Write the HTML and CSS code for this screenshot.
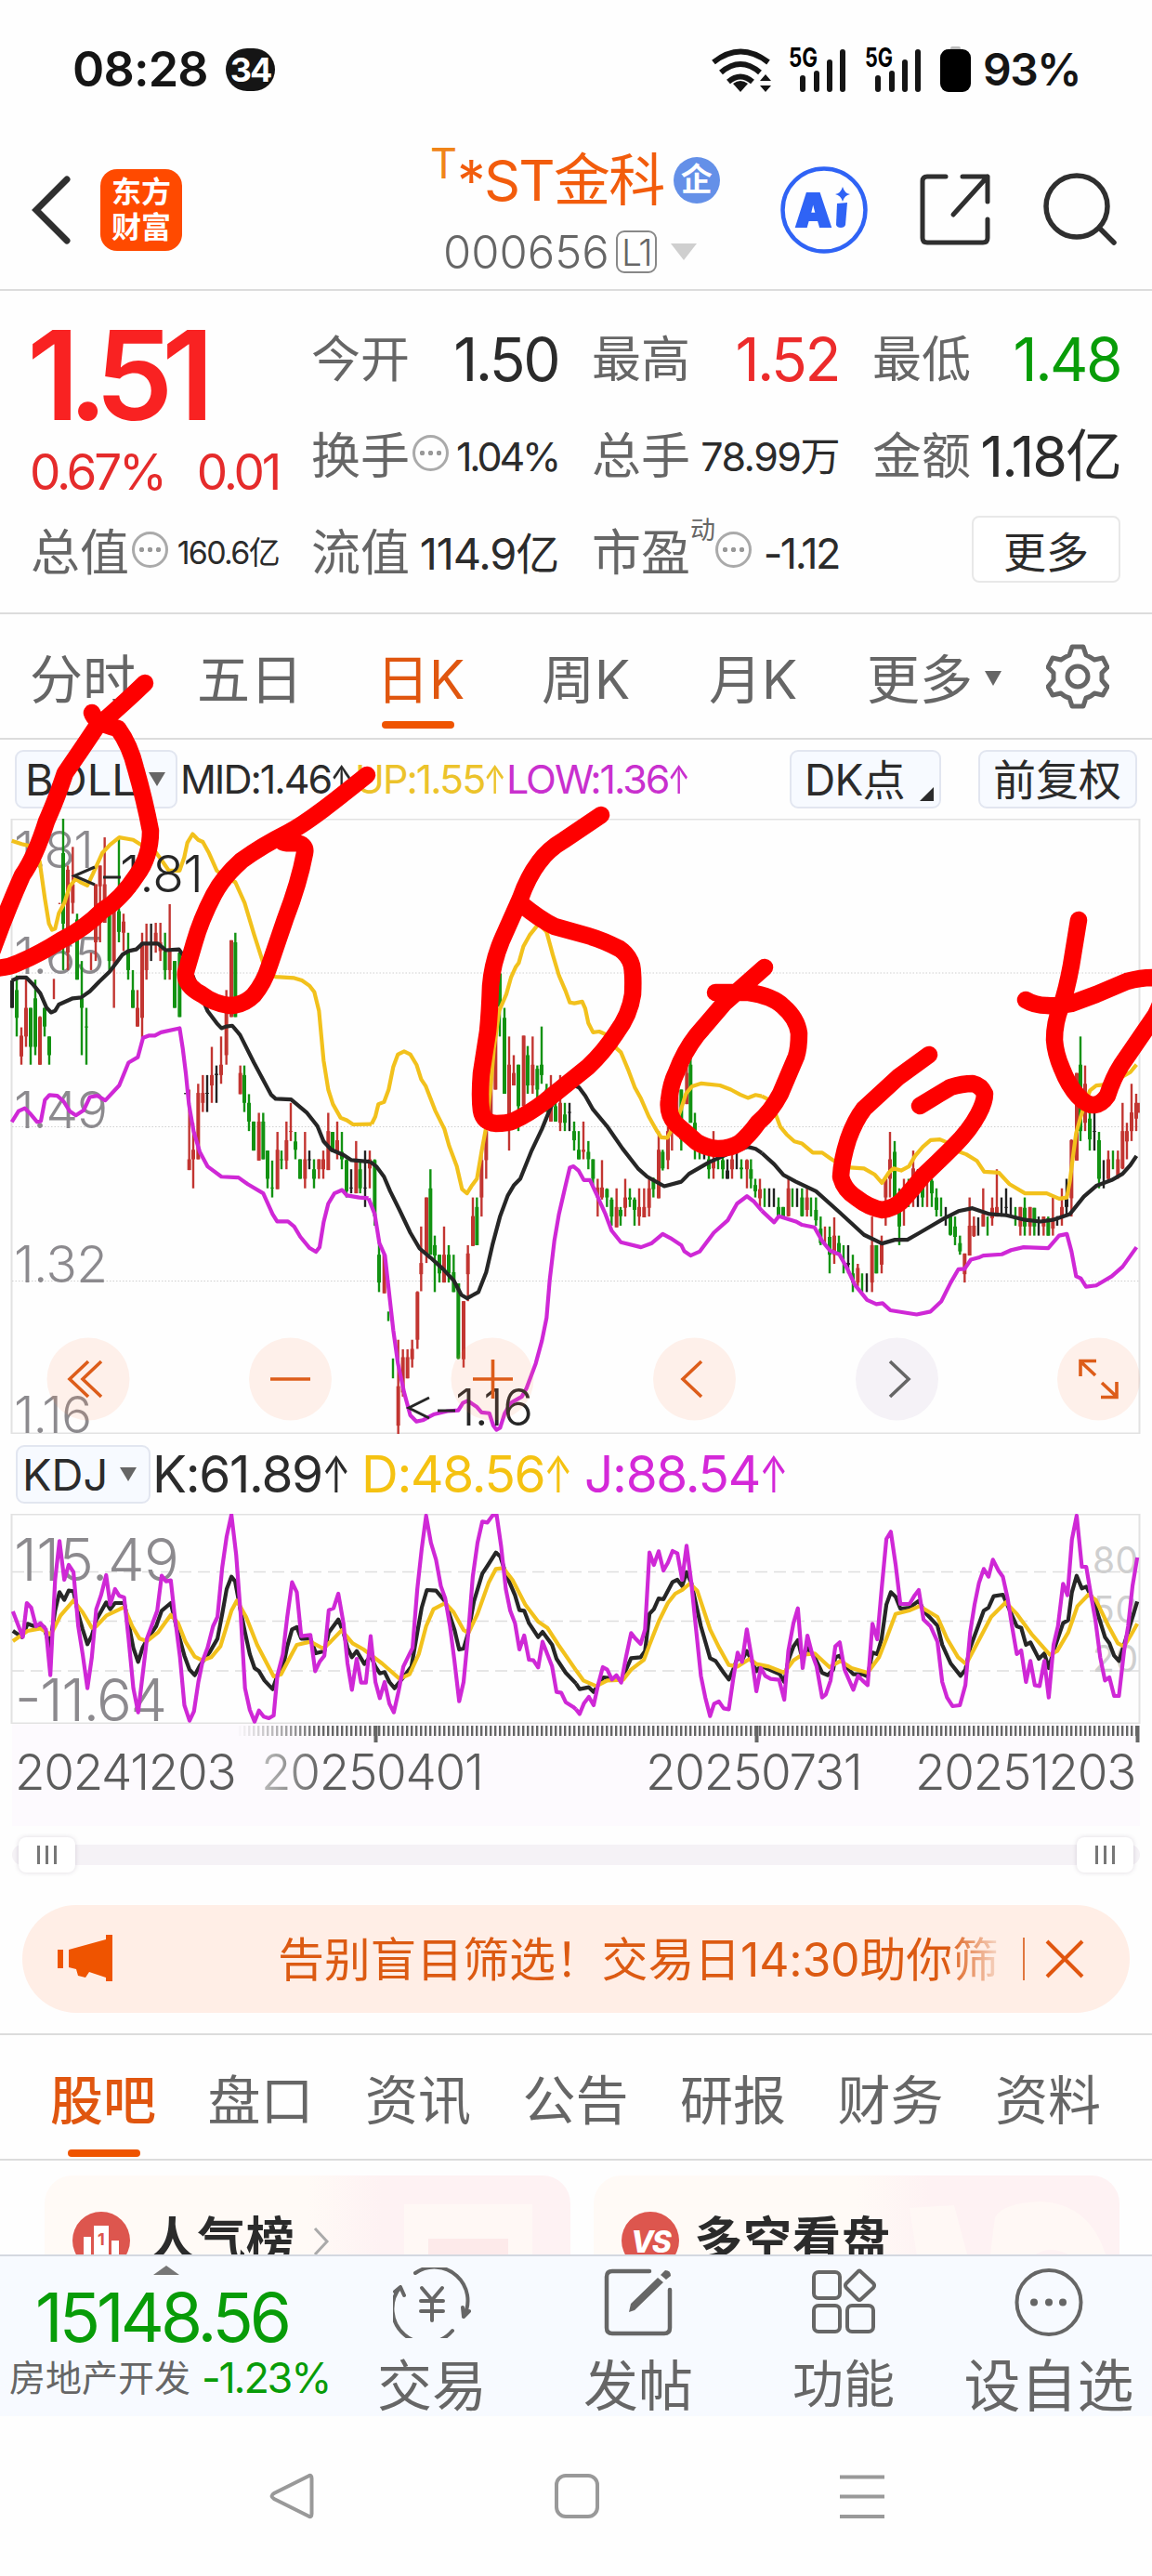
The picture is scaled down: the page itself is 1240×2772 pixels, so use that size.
FILE: index.html
```html
<!DOCTYPE html>
<html lang="zh-CN">
<head>
  <meta charset="UTF-8">
  <title>*ST金科 000656</title>
  <link rel="stylesheet" href="styles.css">
</head>
<body>

  <div class="status">
    <span class="clock">08:28</span>
    <span class="badge">34</span>
    <svg class="signals" width="286" height="54" viewBox="768 46 286 54">
      <g fill="none" stroke="#151515" stroke-width="6">
        <path d="M773 65Q802 42 832 65"/>
        <path d="M781 76Q802 58 823 76"/>
        <path d="M789 86Q802 75 815 86"/>
      </g>
      <path d="M794 88q8-6 16 0l-8 9z" fill="#151515"/>
      <path d="M823 85l6-7 6 7zM823 90l6 7 6-7z" fill="#151515"/>
      <g stroke="#151515" stroke-width="6" stroke-linecap="round">
        <path d="M869 82V94M884 77V94M898 65V94M912 54V94"/>
        <path d="M950 82V94M965 77V94M979 65V94M993 54V94"/>
      </g>
      <text x="854" y="70" class="net" textLength="31" lengthAdjust="spacingAndGlyphs">5G</text>
      <text x="936" y="70" class="net" textLength="30" lengthAdjust="spacingAndGlyphs">5G</text>
      <rect x="1028" y="48" width="11" height="6" rx="2" fill="#bbb"/>
      <rect x="1017" y="51" width="33" height="46" rx="9" fill="#000"/>
    </svg>
    <span class="battery">93%</span>
  </div>

  <div class="header">
    <svg class="back" width="44" height="74" viewBox="0 0 44 74"><path d="M39 4L6 37L39 70" fill="none" stroke="#2f2f2f" stroke-width="7" stroke-linecap="round"/></svg>
    <div class="logo"><span>东方</span><span>财富</span></div>
    <div class="title">
      <div class="name"><sup>T</sup><span>*ST金科</span><i>企</i></div>
      <div class="code"><span>000656</span><b>L1</b><em></em></div>
    </div>
    <svg class="ai" width="94" height="94" viewBox="0 0 94 94">
      <circle cx="47" cy="47" r="44.5" fill="none" stroke="#2f63f5" stroke-width="4.5"/>
      <text x="16" y="65" class="ai-text">A</text>
      <path d="M61 40l11-1-2 24q-1 3-5 3t-5-3z" fill="#2f63f5"/>
      <path d="M67 22q2 7 8 8q-6 1-8 8q-2-7-8-8q6-1 8-8z" fill="#2f63f5"/>
    </svg>
    <svg class="share" width="78" height="80" viewBox="0 0 78 80">
      <g fill="none" stroke="#2f2f2f" stroke-width="5" stroke-linecap="round" stroke-linejoin="round">
        <path d="M29 4H9Q4 4 4 9V70Q4 75 9 75H69Q74 75 74 70V50"/>
        <path d="M47 4H74V31M74 4L37 45"/>
      </g>
    </svg>
    <svg class="search" width="80" height="80" viewBox="0 0 80 80">
      <g fill="none" stroke="#2f2f2f" stroke-width="5.5" stroke-linecap="round"><circle cx="37" cy="38" r="33"/><path d="M62 62L77 77"/></g>
    </svg>
  </div>

  <div class="quote">
    <div class="last">
      <div class="price">1.51</div>
      <div class="change"><span>0.67%</span><span>0.01</span></div>
      <div class="cell"><label>总值</label><i class="tip"></i><span class="v34">160.6亿</span></div>
    </div>
    <div class="grid">
      <div class="cell"><label>今开</label><span class="v64">1.50</span></div>
      <div class="cell"><label>最高</label><span class="v64 red">1.52</span></div>
      <div class="cell"><label>最低</label><span class="v64 green">1.48</span></div>
      <div class="cell"><label>换手</label><i class="tip"></i><span class="v42">1.04%</span></div>
      <div class="cell"><label>总手</label><span class="v43">78.99万</span></div>
      <div class="cell"><label>金额</label><span class="v60">1.18亿</span></div>
      <div class="cell"><label>流值</label><span class="v47">114.9亿</span></div>
      <div class="cell"><label>市盈</label><small>动</small><i class="tip"></i><span class="v46">-1.12</span></div>
      <div class="cell"><button class="more">更多</button></div>
    </div>
  </div>

  <div class="periods">
    <span>分时</span>
    <span>五日</span>
    <span class="on">日K</span>
    <span>周K</span>
    <span>月K</span>
    <span>更多<em></em></span>
    <svg width="68" height="70" viewBox="-34 -35 68 70">
      <g fill="none" stroke="#666" stroke-width="5" stroke-linejoin="round">
        <path d="M-6 -32H6L9 -23Q14 -21 18 -18L27 -20L32 -10L26 -4V4L32 11L27 20L18 18Q14 22 9 23L6 32H-6L-9 23Q-14 22 -18 18L-27 20L-32 11L-26 4V-4L-32 -10L-27 -20L-18 -18Q-14 -21 -9 -23Z"/>
        <circle r="11"/>
      </g>
    </svg>
  </div>

  <div class="indicator boll">
    <span class="pick">BOLL<em></em></span>
    <span class="mid">MID:1.46<u>↑</u></span>
    <span class="up">UP:1.55<u>↑</u></span>
    <span class="low">LOW:1.36<u>↑</u></span>
    <span class="pick dk">DK点<em></em></span>
    <span class="pick fq">前复权</span>
  </div>

  <div class="panel price-panel">
    <svg width="1240" height="662" viewBox="0 0 1240 662">
      <rect x="12.5" y="0.5" width="1214" height="661" class="frame"/>
      <path d="M13 166H1227M13 331.500H1227M13 497.500H1227" class="dots"/>
      <g class="scale">
        <text x="15" y="53" textLength="86">1.81</text>
        <text x="15" y="167" textLength="98">1.65</text>
        <text x="15" y="333" textLength="101">1.49</text>
        <text x="15" y="499" textLength="101">1.32</text>
        <text x="15" y="661" textLength="84">1.16</text>
      </g>
      <g id="candles" transform="translate(0 -21) scale(.33333 .44643)"></g>
      <g class="line gold">
        <g transform="translate(0 -21) scale(.33333 .44643)">
          <polyline points="38,100 70,108 110,115 128,150 145,240 158,300 168,315 178,312 190,275 208,250 225,210 245,192 260,200 282,208 300,180 330,130 355,110 385,92 430,98 460,112 490,115 520,145 545,172 580,172 595,140 605,105 622,84 640,98 655,103 675,130 700,172 730,190 760,200 790,250 820,325 850,395 870,420 890,428 950,431 975,437 1000,450 1015,465 1030,510 1045,630 1060,700 1075,735 1100,768 1120,774 1140,784 1200,783"/>
        </g>
        <g transform="translate(400 -21) scale(.33333 .44643)">
          <polyline points="0,783 12,765 22,735 40,730 55,700 70,645 85,615 105,608 125,615 145,640 160,675 175,692 205,750 235,795 250,835 275,885 292,940 308,950 325,930 340,915 355,850 370,790 385,690 395,600 412,510 435,470 450,430 465,405 475,395 490,355 510,328 540,300 565,320 585,375 605,425 625,460 640,490 655,492 680,488 690,505 700,540 715,562 735,560 760,568 790,600 805,610 830,655 850,695 870,722 895,765 920,798 935,815 955,816 970,795 985,775 1000,745 1015,710 1035,692 1065,685 1125,690 1160,700 1190,712 1215,720 1240,713 1260,716"/>
        </g>
        <g transform="translate(820 -21) scale(.33333 .44643)">
          <polyline points="0,716 25,725 45,760 60,790 80,808 105,825 130,830 165,852 195,852 220,865 240,875 285,888 330,890 365,905 388,925 410,900 425,890 450,895 475,885 495,860 520,838 545,822 575,820 600,828 630,848 660,856 695,872 718,898 765,900 800,928 850,950 920,950 960,963 985,960 995,920 1005,860 1015,805 1030,765 1045,730 1060,702 1080,690 1110,688 1150,675 1190,658 1210,640"/>
        </g>
      </g>
      <g class="line black">
        <g transform="translate(0 -21) scale(.33333 .44643)">
          <polyline points="38,437 60,430 85,430 105,445 130,468 150,502 165,514 178,510 190,495 235,480 262,478 290,463 320,440 355,415 395,375 415,366 440,362 460,348 510,348 535,364 578,362 600,385 630,440 670,510 700,540 715,552 730,548 750,546 775,568 820,635 875,712 890,722 940,724 990,755 1025,788 1045,825 1070,845 1110,858 1135,870 1195,874"/>
        </g>
        <g transform="translate(400 -21) scale(.33333 .44643)">
          <polyline points="-5,874 15,885 40,910 60,945 90,990 125,1045 155,1083 190,1105 230,1132 265,1160 290,1195 308,1203 345,1188 370,1140 390,1075 415,1005 440,955 460,930 480,915 515,850 550,795 580,740 605,712 650,688 670,695 690,715 715,748 760,788 810,842 860,890 890,910 945,933 1000,922 1025,903 1090,875 1160,852 1215,838 1240,843 1260,853"/>
        </g>
        <g transform="translate(820 -21) scale(.33333 .44643)">
          <polyline points="0,853 40,880 70,906 110,922 175,945 250,995 330,1050 388,1071 430,1062 470,1062 510,1045 590,1010 635,993 680,986 735,1000 790,1003 850,1014 900,1018 940,1014 995,1000 1040,958 1080,932 1130,918 1165,903 1190,882 1210,860"/>
        </g>
      </g>
      <g class="line purple">
        <g transform="translate(0 -21) scale(.33333 .44643)">
          <polyline points="38,778 60,752 80,745 100,760 120,778 132,776 145,725 160,713 185,715 205,728 225,752 245,762 270,750 290,718 315,715 340,726 385,690 415,635 445,622 462,575 480,570 500,570 520,562 580,552 590,600 600,660 610,735 625,800 645,850 670,885 715,910 770,912 800,928 850,950 880,1000 895,1018 930,1018 950,1030 970,1055 1000,1082 1020,1091 1032,1080 1045,1020 1060,975 1080,950 1105,942 1120,955 1160,960 1190,962"/>
        </g>
        <g transform="translate(400 -21) scale(.33333 .44643)">
          <polyline points="-10,962 10,1000 25,1070 43,1100 55,1180 70,1280 85,1360 105,1430 125,1485 145,1500 165,1497 200,1483 245,1475 280,1473 295,1455 310,1450 340,1465 355,1478 380,1480 393,1510 403,1520 415,1515 430,1480 450,1455 485,1440 500,1420 530,1360 550,1305 565,1250 575,1160 590,1065 605,1000 625,935 640,888 652,885 668,895 685,918 705,918 725,950 755,1000 775,1040 805,1068 870,1080 905,1070 940,1048 965,1058 1000,1075 1010,1090 1030,1100 1060,1090 1105,1045 1150,1015 1180,975 1212,957 1235,970 1260,992"/>
        </g>
        <g transform="translate(820 -21) scale(.33333 .44643)">
          <polyline points="0,992 40,1020 55,1005 110,1018 130,1026 170,1032 195,1065 220,1088 250,1097 275,1130 300,1170 340,1207 370,1217 390,1215 415,1232 500,1242 545,1235 580,1210 610,1165 635,1133 655,1132 675,1110 700,1105 715,1100 775,1097 805,1087 845,1080 925,1082 960,1052 985,1048 1000,1090 1015,1150 1030,1155 1047,1175 1080,1172 1130,1150 1165,1127 1210,1080"/>
        </g>
      </g>
      <g class="mark">
        <path d="M102 52L80 61.500L102 71M111 63H130"/>
        <text x="129" y="79" textLength="90">1.81</text>
        <path d="M462 623L440 634L462 645M471 637H490"/>
        <text x="490" y="653" textLength="84">1.16</text>
      </g>
      <g class="tools">
        <circle cx="95" cy="603" r="44.500"/>
        <circle cx="312.500" cy="603" r="44.500"/>
        <circle cx="530" cy="603" r="44.500"/>
        <circle cx="747.500" cy="603" r="44.500"/>
        <circle cx="965.500" cy="603" r="44.500" class="off"/>
        <circle cx="1182.500" cy="603" r="44.500"/>
        <path d="M95 584L75 603L95 622M109 584L89 603L109 622"/>
        <path d="M291 603H334M509 603H552M530.500 582V624"/>
        <path d="M755 584L735 603L755 622"/>
        <path d="M958 584L978 603L958 622" class="off"/>
        <path d="M1180 583.500H1163V600M1163 584L1179 599M1185 622.500H1202V606M1202 622L1186 607"/>
      </g>
    </svg>
  </div>

  <div class="indicator kdj">
    <span class="pick">KDJ<em></em></span>
    <span class="k">K:61.89<u>↑</u></span>
    <span class="d">D:48.56<u>↑</u></span>
    <span class="j">J:88.54<u>↑</u></span>
  </div>

  <div class="panel">
    <svg width="1240" height="226" viewBox="0 0 1240 226">
      <rect x="12.5" y="0.5" width="1214" height="225" class="frame"/>
      <path d="M13 62.500H1227M13 115.500H1227M13 169H1227" class="dashes"/>
      <g class="levels">
        <text x="1176" y="64" textLength="49">80</text>
        <text x="1176" y="117" textLength="49">50</text>
        <text x="1176" y="170" textLength="49">20</text>
      </g>
      <g class="scale big">
        <text x="15" y="72" textLength="178">115.49</text>
        <text x="16" y="223" textLength="164">-11.64</text>
      </g>
      <g class="line black">
        <g transform="translate(0 -79) scale(.3954 .33333)">
          <polyline points="35,615 60,635 75,592 98,602 120,602 135,665 150,550 162,490 175,515 187,485 200,487 213,560 225,610 238,658 250,630 262,580 289,523 300,545 313,525 338,525 350,590 363,670 376,715 388,670 402,640 425,600 440,550 465,525 480,600 502,695 516,740 530,758 545,725 570,685 592,640 605,560 617,480 630,440 640,455 655,550 667,620 680,690 693,735 705,745 720,775 742,803 755,760 770,735 782,665 795,610 808,603 820,640 845,640 860,687 883,680 895,620 921,578 935,620 946,670 958,700 971,680 992,722 1009,695 1022,730 1034,752 1047,748 1060,780 1074,800 1098,765 1120,730 1136,620 1148,540 1162,483 1187,485 1212,520 1237,610 1250,675 1262,672 1275,620 1290,520 1313,430 1327,405 1350,362 1362,375 1377,430 1402,500 1414,548 1427,550 1440,590 1465,635 1477,618 1503,660 1515,705 1540,750 1568,785"/>
        </g>
        <g transform="translate(620 -79) scale(.3954 .33333)">
          <polyline points="0,785 10,803 35,797 48,812 60,790 75,765 98,768 123,775 150,703 176,700 188,680 200,560 212,545 225,510 238,513 263,457 276,450 289,470 301,425 314,460 340,600 365,703 380,712 402,750 416,772 428,740 440,700 452,710 465,680 478,710 491,745 503,728 555,755 567,780 578,710 592,665 604,645 615,700 630,670 650,700 670,750 685,758 700,740 706,700 718,695 731,725 755,755 780,755 794,762 807,685 820,690 832,640 845,530 857,490 870,505 883,543 908,540 933,518 950,555 984,598 997,660 1020,720 1047,760 1060,740 1073,670 1110,550 1123,540 1137,503 1162,498 1185,560 1200,600 1212,605 1225,660 1237,652 1260,705 1275,688 1287,735 1300,680 1326,590 1340,580 1350,490 1363,437 1377,478 1389,472 1410,520 1440,635 1452,655 1465,695 1478,712 1492,660 1528,520"/>
        </g>
      </g>
      <g class="line gold">
        <g transform="translate(0 -79) scale(.3954 .33333)">
          <polyline points="35,648 75,615 110,607 138,627 150,600 165,565 200,517 225,555 250,605 262,600 290,565 338,538 360,600 380,640 400,648 430,620 465,563 485,590 505,650 530,698 550,710 575,700 600,665 630,550 645,517 670,570 700,660 745,762 765,755 785,710 808,660 845,650 880,672 900,650 930,613 960,655 990,675 1040,720 1088,770 1115,755 1140,690 1160,600 1180,545 1212,525 1235,555 1262,612 1275,622 1300,560 1330,460 1350,415 1370,412 1395,450 1430,530 1465,585 1490,605 1520,660 1568,742"/>
        </g>
        <g transform="translate(620 -79) scale(.3954 .33333)">
          <polyline points="0,742 20,775 55,793 85,775 128,773 150,740 185,708 200,660 225,585 250,525 270,495 290,482 310,462 330,485 365,610 390,670 416,725 440,730 473,705 491,722 525,730 567,750 592,710 615,692 650,688 690,732 720,712 750,735 794,750 825,700 845,640 870,560 910,548 935,535 984,570 1010,640 1040,700 1062,722 1090,660 1130,570 1170,523 1200,560 1240,625 1290,692 1310,680 1340,620 1365,535 1395,498 1415,515 1450,600 1475,655 1492,665 1510,630 1528,592"/>
        </g>
      </g>
      <g class="line purple">
        <g transform="translate(0 -79) scale(.3954 .33333)">
          <polyline points="35,552 62,635 73,525 85,540 98,600 110,590 125,610 137,758 150,450 162,325 175,450 187,402 200,425 213,600 225,690 238,800 250,700 262,545 275,500 289,435 300,530 313,480 325,502 338,507 350,640 363,800 376,878 388,760 400,640 428,550 440,437 452,455 465,452 475,560 490,700 502,855 516,905 528,875 540,780 552,710 565,670 580,600 592,570 605,410 617,310 630,240 643,370 655,560 667,800 680,870 693,908 705,872 718,892 732,897 745,888 755,760 770,690 782,570 795,458 808,490 820,632 845,628 858,745 870,715 883,695 895,548 908,542 921,495 935,590 946,720 958,805 971,705 983,782 996,782 1009,632 1022,780 1034,832 1047,780 1060,850 1072,878 1085,810 1098,730 1123,670 1136,480 1148,350 1160,243 1173,330 1187,385 1200,470 1212,510 1225,600 1237,710 1250,842 1262,780 1275,620 1287,440 1300,330 1313,262 1327,265 1342,241 1352,241 1364,340 1377,480 1389,550 1402,590 1414,675 1427,630 1440,708 1452,710 1465,733 1477,650 1490,690 1503,730 1515,812 1528,815 1540,845 1560,860 1568,868"/>
        </g>
        <g transform="translate(620 -79) scale(.3954 .33333)">
          <polyline points="0,868 10,883 22,848 35,828 48,855 60,790 73,732 85,740 98,772 110,758 123,782 136,700 150,622 162,640 176,657 188,610 200,362 212,402 225,358 238,420 250,395 263,357 276,365 289,450 301,340 314,460 326,600 340,760 352,830 365,890 376,850 389,843 402,865 416,868 428,770 440,685 452,715 465,610 478,700 491,810 503,735 515,760 530,770 553,773 567,837 578,680 592,590 604,542 617,735 630,630 643,690 655,730 670,830 680,820 693,775 706,665 718,652 731,740 755,805 768,760 780,775 794,790 807,592 820,642 832,480 845,318 857,295 870,400 883,528 908,528 922,500 933,483 946,578 965,600 984,650 997,780 1010,830 1025,858 1045,855 1060,790 1073,620 1085,530 1097,460 1110,415 1123,440 1135,385 1150,420 1162,440 1175,510 1187,600 1200,690 1212,678 1225,780 1237,712 1249,790 1262,793 1275,712 1287,830 1300,660 1312,600 1326,463 1338,500 1350,320 1363,243 1377,408 1389,408 1402,500 1414,580 1427,700 1440,775 1452,765 1465,825 1478,825 1492,680 1503,600 1515,470 1528,378"/>
        </g>
      </g>
    </svg>
  </div>

  <div class="axis">
    <svg width="1214" height="20" viewBox="13 0 1214 20">
      <defs><linearGradient id="fade" gradientUnits="userSpaceOnUse" x1="255" y1="0" x2="345" y2="0"><stop offset="0" stop-color="#666" stop-opacity="0"/><stop offset="1" stop-color="#666"/></linearGradient></defs>
      <path d="M257 7.500H1226V7.600" fill="none" stroke="url(#fade)" stroke-width="11" stroke-dasharray="2.400 2.600"/>
      <path d="M404.500 2V20M814.500 2V20M1224.500 2V20" stroke="#666" stroke-width="4"/>
    </svg>
    <div class="dates"><span>20241203</span><span class="fade">20250401</span><span>20250731</span><span>20251203</span></div>
  </div>

  <div class="slider"><div class="track"><i></i><i></i></div></div>

  <div class="notice">
    <svg class="horn" width="60" height="52" viewBox="0 0 60 52" fill="#ef5400"><path d="M0 16h6v20H0zM12 16L52 5V0H59V50H52V46L34 40L30 46L22 44L20 37L12 35Z"/></svg>
    <span class="msg">告别盲目筛选！交易日14:30助你筛</span>
    <b></b>
    <svg width="42" height="42" viewBox="0 0 42 42"><path d="M2 2L40 40M40 2L2 40" stroke="#e0560f" stroke-width="4"/></svg>
  </div>

  <div class="tabs">
    <span class="on">股吧</span><span>盘口</span><span>资讯</span><span>公告</span><span>研报</span><span>财务</span><span>资料</span>
  </div>

  <div class="cards">
    <div class="card">
      <svg width="62" height="62" viewBox="0 0 62 62"><circle cx="31" cy="31" r="31" fill="#dd564e"/><path d="M12 27h8V50h-8zM23 15H39V50H23zM42 31h8V50h-8z" fill="#fff"/><text x="27" y="36" class="rank">1</text></svg>
      <span>人气榜</span>
      <svg width="20" height="34" viewBox="0 0 20 34"><path d="M3 3L16 17L3 31" fill="none" stroke="#aaa" stroke-width="3"/></svg>
      <div class="art bars"></div>
    </div>
    <div class="card">
      <svg width="62" height="62" viewBox="0 0 62 62"><circle cx="31" cy="31" r="31" fill="#dd564e"/><text x="10" y="44" class="vs">VS</text></svg>
      <span>多空看盘</span>
      <svg class="art vsart" width="221" height="100" viewBox="0 0 221 100">
        <path d="M0 35L48 32L66 100H10ZM85 100L92 45Q100 30 140 28Q200 30 215 100H190Q150 60 120 100Z"/>
      </svg>
    </div>
  </div>

  <div class="bottom">
    <div class="index">
      <em></em>
      <strong>15148.56</strong>
      <div><span>房地产开发</span><b>-1.23%</b></div>
    </div>
    <div class="act a1">
      <svg width="84" height="76" viewBox="0 0 84 76">
        <g fill="none" stroke="#666" stroke-width="4" stroke-linecap="round" stroke-linejoin="round">
          <path d="M24 6A36 36 0 0 1 76 53L82 47M76 53L75 43"/>
          <path d="M64 68A36 36 0 0 1 8 21L2 26M8 21L12 30"/>
          <path d="M31 22L42 35L53 22M42 35V57M30 36H54M30 47H54"/>
        </g>
      </svg>
      <span>交易</span>
    </div>
    <div class="act a2">
      <svg width="76" height="76" viewBox="0 0 76 76">
        <path d="M50 4H10Q4 4 4 10V65Q4 71 10 71H66Q72 71 72 65V24" fill="none" stroke="#666" stroke-width="4.500" stroke-linecap="round"/>
        <path d="M28 48L30 39L59 11L65 16L34 46ZM62 8L67 3Q73 3 73 9L68 13Z" fill="#666"/>
      </svg>
      <span>发帖</span>
    </div>
    <div class="act a3">
      <svg width="70" height="76" viewBox="0 0 70 76">
        <g fill="none" stroke="#666" stroke-width="4">
          <rect x="3" y="5" width="28" height="28" rx="5"/><rect x="3" y="41" width="28" height="28" rx="5"/><rect x="39" y="41" width="28" height="28" rx="5"/>
          <path d="M50 5Q52 2 54 5L67 17Q69 19 67 22L54 34Q52 36 50 34L38 22Q36 19 38 17Z"/>
        </g>
      </svg>
      <span>功能</span>
    </div>
    <div class="act a4">
      <svg width="74" height="76" viewBox="0 0 74 76">
        <circle cx="37" cy="37.500" r="34.500" fill="none" stroke="#666" stroke-width="4"/>
        <g fill="#666"><circle cx="21" cy="37.500" r="4"/><circle cx="37" cy="37.500" r="4"/><circle cx="52" cy="37.500" r="4"/></g>
      </svg>
      <span>设自选</span>
    </div>
  </div>

  <div class="nav">
    <svg width="48" height="50" viewBox="0 0 48 50"><path d="M42 3.500Q45.500 1.500 45.500 6V44Q45.500 48.500 42 46.500L5 28Q0 25 5 22Z"/></svg>
    <svg width="48" height="50" viewBox="0 0 48 50"><rect x="2" y="3" width="44" height="44" rx="10"/></svg>
    <svg width="48" height="50" viewBox="0 0 48 50"><path d="M0 4.500H48M0 25.500H48M0 47H48"/></svg>
  </div>

  <!-- finger drawing over the peaks -->
  <svg class="scribble" width="1240" height="1400" viewBox="0 0 1240 1400">
    <path d="M156 735Q128 762 104 782Q84 812 70 832C60 862 56 870 50 884Q38 922 24 942Q8 978 -8 1022"/>
    <path d="M99 767Q102 778 127 784Q140 802 146 827Q156 862 162 894Q162 922 147 942Q130 968 110 980Q90 1000 67 1011Q42 1027 20 1036Q8 1042 -10 1042"/>
    <path d="M395 834C360 862 330 886 310 896Q282 910 260 926Q240 944 230 963Q216 990 209 1015L200 1046Q198 1060 217 1070Q230 1080 247 1082Q262 1082 273 1071Q284 1058 290 1039L307 989Q322 950 328 918Q330 908 317 907Q308 908 304 906"/>
    <path d="M647 877L607 904Q590 914 580 928Q568 944 560 967L540 1012Q530 1036 528 1061Q527 1090 525 1110L518 1155Q516 1180 518 1195Q520 1208 534 1209Q546 1209 553 1206Q570 1198 587 1185L633 1148Q650 1132 663 1112Q678 1092 681 1070Q682 1050 680 1039Q677 1028 667 1021Q650 1012 633 1007L597 997Q582 990 560 972"/>
    <path d="M770 1068H806Q832 1072 843 1083Q858 1096 860 1112Q860 1128 857 1137L840 1177Q830 1196 816 1208Q806 1222 796 1230Q786 1236 773 1236Q762 1236 750 1229L727 1209Q718 1198 720 1184Q722 1166 728 1154Q736 1132 750 1114L780 1079L823 1041"/>
    <path d="M1000 1135L967 1159L930 1193Q920 1206 913 1226Q906 1248 905 1266Q908 1280 922 1289Q936 1300 950 1302Q962 1300 970 1293Q982 1280 993 1266Q1010 1250 1027 1233Q1044 1216 1053 1199Q1060 1186 1060 1177Q1056 1168 1047 1166Q1036 1166 1023 1170L990 1190"/>
    <path d="M1161 990L1153 1039Q1148 1066 1142 1083Q1135 1100 1135 1119Q1136 1134 1143 1150Q1150 1168 1160 1179Q1170 1190 1178 1189Q1186 1188 1192 1179Q1198 1160 1207 1146L1244 1092Q1262 1056 1240 1052Q1228 1052 1213 1056L1180 1070L1153 1080Q1140 1083 1127 1082Q1114 1082 1104 1076"/>
  </svg>

  <script src="chart.js"></script>
</body>
</html>
```

FILE: styles.css
```css
* {
  box-sizing: border-box;
}

body {
  margin: 0;
  width: 1240px;
  height: 2772px;
  overflow: hidden;
  position: relative;
  background: #fefefe;
  color: #2b2b2b;
  font-family: Inter, "Noto Sans CJK SC", sans-serif;
  line-height: 1;
}

i, em {
  font-style: normal;
}

/* status bar */
.status {
  height: 150px;
  padding: 0 77px 0 78px;
  display: flex;
  align-items: center;
  color: #151515;
}

.clock {
  font-size: 52px;
  font-weight: 600;
  letter-spacing: -0.8px;
  white-space: nowrap;
  width: 169px;
}

.badge {
  width: 54px;
  height: 46px;
  border-radius: 24px;
  background: #151515;
  color: #fff;
  font-size: 36px;
  font-weight: 700;
  letter-spacing: -2px;
  line-height: 46px;
  text-align: center;
}

.signals {
  margin: 0 9px 0 467px;
  overflow: visible;
}

.net {
  font-size: 28px;
  font-weight: 700;
}

.battery {
  font-size: 48px;
  font-weight: 600;
  letter-spacing: -1.5px;
}

/* header */
.header {
  height: 163px;
  border-bottom: 2px solid #dcdcdc;
  padding-left: 33px;
  display: flex;
}

.back {
  margin-top: 39px;
}

.logo {
  width: 88px;
  height: 88px;
  margin: 32px 0 0 31px;
  border-radius: 18px;
  background: #ff4a00;
  color: #fff;
  font-size: 32px;
  font-weight: 700;
  padding-top: 7px;
  display: flex;
  flex-direction: column;
  align-items: center;
}

.logo span {
  height: 38px;
  line-height: 36px;
}

.title {
  width: 375px;
  margin-left: 269px;
}

.name {
  height: 88px;
  color: #f25c0c;
  display: flex;
  align-items: center;
  font-size: 61px;
}

.name sup {
  font-size: 45px;
  color: #f08418;
  line-height: 1;
  margin: -38px 0 0 -2px;
  font-weight: 400;
}

.name span {
  letter-spacing: -1.7px;
  white-space: nowrap;
}

.name i {
  width: 50px;
  height: 50px;
  margin-left: 10px;
  border-radius: 50%;
  background: #6490e8;
  color: #fff;
  font-size: 34px;
  font-weight: 700;
  line-height: 48px;
  text-align: center;
}

.code {
  display: flex;
  align-items: center;
  height: 66px;
  padding-left: 12px;
  color: #666;
  font-size: 49px;
  font-weight: 350;
}

.code b {
  width: 44px;
  height: 46px;
  margin-left: 7px;
  border: 2px solid #888;
  border-radius: 9px;
  font-size: 39px;
  font-weight: 350;
  line-height: 43px;
  letter-spacing: -2px;
  text-align: center;
}

.code em {
  margin-left: 15px;
  border: 14px solid transparent;
  border-top: 18px solid #cfcfcf;
  border-bottom: 0;
}

.ai {
  margin-top: 29px;
}

.ai-text {
  font-size: 49px;
  font-weight: 900;
  fill: #2f63f5;
  stroke: #2f63f5;
  stroke-width: 2;
}

.share {
  margin: 36px 0 0 55px;
}

.search {
  margin: 34px 0 0 55px;
}

/* quote */
.quote {
  height: 348px;
  border-bottom: 2px solid #dcdcdc;
  padding: 22px 34px 0 33px;
  display: flex;
}

.last {
  width: 267px;
  margin-right: 35px;
  color: #e52b2b;
}

.price {
  height: 138px;
  line-height: 137px;
  margin-left: -4px;
  font-size: 134px;
  font-weight: 600;
  letter-spacing: -12.5px;
  color: #f92222;
  white-space: nowrap;
}

.change {
  display: flex;
  justify-content: space-between;
  height: 70px;
  line-height: 70px;
  font-size: 53px;
  letter-spacing: -3.2px;
  margin-left: -1px;
}

.grid {
  flex: 1;
  display: grid;
  grid-template-columns: 266px 266px 267px;
  grid-auto-rows: 104px;
  column-gap: 36px;
}

.cell {
  display: flex;
  align-items: center;
  height: 104px;
  white-space: nowrap;
  color: #2b2b2b;
}

.cell label {
  font-size: 53px;
  color: #666;
}

.cell span {
  margin-left: auto;
}

.cell small {
  font-size: 27px;
  color: #666;
  margin: -50px 0 0 0;
  width: 24px;
}

.tip {
  width: 39px;
  height: 39px;
  margin: -8px 0 0 3px;
  border: 3px solid #aaa;
  border-radius: 50%;
  display: block;
  background:
    radial-gradient(circle, #999 2.5px, transparent 3px) -9px 0 no-repeat,
    radial-gradient(circle, #999 2.5px, transparent 3px) 0 0 no-repeat,
    radial-gradient(circle, #999 2.5px, transparent 3px) 9px 0 no-repeat;
}

.v34 { font-size: 34px; letter-spacing: -1.7px; }
.v42 { font-size: 43px; letter-spacing: -3.2px; }
.v43 { font-size: 43px; letter-spacing: -1.5px; }
.v46 { font-size: 45px; letter-spacing: -2.5px; }
.v47 { font-size: 47px; letter-spacing: -1.2px; }
.v60 { font-size: 61px; letter-spacing: -2px; }
.v64 { font-size: 64px; letter-spacing: -2.5px; }
.cell .red { color: #ec2b2b; }
.cell .green { color: #089c08; }

.more {
  width: 160px;
  height: 72px;
  margin-left: auto;
  margin-top: -8px;
  border: 2px solid #e8e8e8;
  border-radius: 8px;
  background: #fff;
  color: #2b2b2b;
  font: 46px Inter, "Noto Sans CJK SC", sans-serif;
}

/* period tabs */
.periods {
  height: 135px;
  border-bottom: 2px solid #dcdcdc;
  padding-left: 32px;
  display: grid;
  grid-template-columns: 180px 193px 178px 180px 170px 193px 70px;
  font-size: 57px;
  color: #666;
}

.periods span {
  height: 133px;
  line-height: 141px;
  white-space: nowrap;
  justify-self: start;
}

.periods svg {
  margin-top: 32px;
}

.periods em {
  display: inline-block;
  margin-left: 13px;
  vertical-align: 14px;
  border: 9px solid transparent;
  border-top: 16px solid #666;
  border-bottom: 0;
}

.on {
  color: #e0560f;
  position: relative;
}

.on::after {
  content: "";
  position: absolute;
  left: 6px;
  bottom: 10px;
  width: 78px;
  height: 8px;
  border-radius: 4px;
  background: #ef5400;
}

/* indicator rows */
.indicator {
  display: flex;
  align-items: center;
  white-space: nowrap;
}

.indicator u {
  display: inline-block;
  text-decoration: none;
  transform: scaleX(.68);
  margin: 0 -.15em;
}

.boll {
  height: 85px;
  padding: 0 16px;
  font-size: 43px;
  letter-spacing: -2px;
}

.kdj {
  height: 86px;
  padding-left: 17px;
  font-size: 55px;
  letter-spacing: -1.3px;
}

.pick {
  width: 175px;
  height: 63px;
  border: 2px solid #e2e6f0;
  border-radius: 9px;
  background: #f7faff;
  font-size: 47px;
  letter-spacing: 0;
  padding-left: 9px;
  margin-right: 3px;
  display: flex;
  align-items: center;
}

.pick em {
  margin-left: 13px;
  border: 9px solid transparent;
  border-top: 15px solid #666;
  border-bottom: 0;
}

.kdj .pick {
  width: 145px;
  margin-right: 2px;
  padding-left: 5px;
}

.mid { width: 188px; }
.up { width: 163px; color: #ecc32b; }
.low { color: #c930ce; }

.dk {
  width: 163px;
  margin: 0 40px 0 auto;
  padding-left: 14px;
  font-size: 46px;
  letter-spacing: -.8px;
  position: relative;
}

.dk em {
  position: absolute;
  right: 6px;
  bottom: 6px;
  border: 0 solid transparent;
  border-left-width: 15px;
  border-bottom: 15px solid #2b2b2b;
}

.fq {
  width: 171px;
  margin-right: 0;
  padding-left: 14px;
  font-size: 46px;
}

.k { width: 225px; }
.d { width: 240px; color: #f5c211; }
.j { color: #d428d8; }

/* charts */
.panel svg {
  display: block;
}

.frame {
  fill: none;
  stroke: #e2e2e2;
  stroke-width: 2;
}

.dots {
  stroke: #d0d0d0;
  stroke-dasharray: 1.5 2;
}

.dashes {
  stroke: #dedede;
  stroke-width: 1.5;
  stroke-dasharray: 13 7;
}

.line polyline {
  fill: none;
  stroke-width: 4.2;
  stroke-linejoin: round;
  vector-effect: non-scaling-stroke;
}

.gold { stroke: #f2c11c; }
.black { stroke: #262626; }
.purple { stroke: #cf28d6; }

#candles path {
  vector-effect: non-scaling-stroke;
}

.scale text {
  font-size: 55px;
  font-weight: 350;
  fill: #8c8a8e;
}

.scale.big text {
  font-size: 63px;
}

.levels text {
  font-size: 39px;
  font-weight: 400;
  fill: #cfcfcf;
}

.mark text {
  font-size: 55px;
  font-weight: 350;
  fill: #262626;
}

.mark path {
  fill: none;
  stroke: #262626;
  stroke-width: 3;
}

.tools circle {
  fill: #fb8a5e;
  fill-opacity: .12;
}

.tools circle.off {
  fill: #f5f2f7;
  fill-opacity: 1;
}

.tools path {
  fill: none;
  stroke: #dd5d1a;
  stroke-width: 3.6;
}

.tools path.off {
  stroke: #666;
}

.axis {
  height: 110px;
  margin: 0 13px;
  background: #fdfafe;
}

.axis svg {
  display: block;
}

.dates {
  display: grid;
  grid-template-columns: 265px 414px 290px 240px;
  padding-left: 3px;
  font-size: 53px;
  font-weight: 350;
  letter-spacing: -1.3px;
  line-height: 64px;
  color: #5c5c5c;
}

.fade {
  background: linear-gradient(90deg, #bbb, #5c5c5c 70px);
  -webkit-background-clip: text;
  color: transparent;
}

.slider {
  height: 85px;
  padding: 20px 13px 0;
}

.track {
  height: 22px;
  border-radius: 11px;
  background: #f5f2f6;
  display: flex;
  align-items: center;
  justify-content: space-between;
  padding: 0 7px;
}

.track i {
  width: 61px;
  height: 38px;
  border-radius: 8px;
  box-shadow: 0 0 5px rgba(90, 70, 100, .2);
  background:
    linear-gradient(#777, #777) 20px 9px / 3px 20px no-repeat,
    linear-gradient(#777, #777) 29px 9px / 3px 20px no-repeat,
    linear-gradient(#777, #777) 38px 9px / 3px 20px no-repeat,
    #fff;
}

/* notice */
.notice {
  height: 116px;
  margin: 0 24px;
  padding: 0 49px 0 38px;
  border-radius: 58px;
  background: #ffeee6;
  color: #dc5a12;
  display: flex;
  align-items: center;
}

.msg {
  width: 775px;
  margin-left: 177px;
  font-size: 50px;
  letter-spacing: -.2px;
  line-height: 70px;
  padding-top: 2px;
  white-space: nowrap;
  overflow: hidden;
  background: linear-gradient(90deg, #dc5a12 720px, #f6d5c4 775px);
  -webkit-background-clip: text;
  color: transparent;
}

.notice b {
  width: 2px;
  height: 46px;
  margin: 0 22px 0 27px;
  background: #e0773f;
}

/* section tabs */
.tabs {
  height: 137px;
  margin-top: 22px;
  border-top: 2px solid #dcdcdc;
  border-bottom: 2px solid #dcdcdc;
  padding-left: 54px;
  display: grid;
  grid-template-columns: repeat(7, 169.5px);
  font-size: 57px;
  line-height: 141px;
  color: #666;
}

.tabs .on {
  font-weight: 500;
}

.tabs .on::after {
  left: 19px;
}

.cards {
  height: 101px;
  overflow: hidden;
  padding: 16px 0 0 48px;
  display: flex;
  gap: 25px;
}

.card {
  width: 566px;
  height: 140px;
  padding: 39px 0 0 30px;
  border-radius: 30px;
  background: linear-gradient(90deg, #fffaf6 50%, #fef2f3 64%);
  display: flex;
  flex: none;
  overflow: hidden;
  position: relative;
}

.card span {
  margin: 1px 19px 0 20px;
  font-size: 52px;
  font-weight: 600;
  letter-spacing: .4px;
  line-height: 60px;
}

.card:last-child span {
  margin-left: 16px;
  letter-spacing: 1px;
}

.card svg + span + svg {
  margin-top: 15px;
}

.rank {
  font-size: 18px;
  font-weight: 700;
  fill: #dd564e;
}

.vs {
  font-size: 32px;
  font-weight: 800;
  font-style: italic;
  letter-spacing: -2px;
  fill: #fff;
}

.art {
  position: absolute;
}

.bars {
  left: 387px;
  top: 31px;
  width: 138px;
  height: 110px;
  background: linear-gradient(#fdeaea, #fdeaea) 26px 37px / 86px 80px no-repeat, #fff8f5;
}

.card .vsart {
  left: 340px;
  top: 0;
  margin: 0;
  fill: #fff8f5;
}

/* bottom bar */
.bottom {
  height: 174px;
  border-top: 2px solid #d4d8e0;
  background: #f7faff;
  display: flex;
}

.index {
  width: 360px;
  flex: none;
  color: #089c08;
}

.index em {
  display: block;
  width: 28px;
  margin: 10px 0 0 165px;
  border: 14px solid transparent;
  border-bottom: 10px solid #777;
  border-top: 0;
}

.index strong {
  display: block;
  height: 84px;
  line-height: 88px;
  margin: 2px 0 0 38px;
  font-size: 73px;
  font-weight: 400;
  letter-spacing: -4px;
}

.index div {
  display: flex;
  align-items: center;
  height: 50px;
  margin-top: -1px;
  padding-left: 10px;
  white-space: nowrap;
}

.index span {
  font-size: 39px;
  color: #666;
}

.index b {
  margin-left: 12px;
  font-size: 45px;
  font-weight: 400;
  letter-spacing: -2.2px;
}

.act {
  display: flex;
  flex: none;
  flex-direction: column;
  align-items: center;
  padding-top: 12px;
  color: #666;
  font-size: 59px;
  white-space: nowrap;
}

.act span {
  margin-top: 21px;
  line-height: 62px;
}

.a1 { width: 210px; }
.a2 { width: 234px; }
.a3 { width: 208px; font-size: 55px; }
.a4 { width: 234px; font-size: 61px; }

.a3 span {
  margin-top: 18px;
}

.nav {
  height: 172px;
  display: flex;
  gap: 259px;
  padding: 61px 0 0 290px;
}

.nav svg {
  fill: none;
  stroke: #999;
  stroke-width: 4;
}

.scribble {
  position: absolute;
  left: 0;
  top: 0;
  fill: none;
  stroke: #fe0000;
  stroke-width: 18.5;
  stroke-linecap: round;
  stroke-linejoin: round;
}
```

FILE: chart.js
```js
// color, x, high, low, body top, body bottom (no body = thin bar)
const parts = [
  [0, `k 39 437 503 437 503;g 54 425 572 460 527;r 69 550 640 570 620;r 84 430 597 503 572;g 99 503 640 503 597;g 114 435 617 480 597;r 129 523 640 525 640;g 144 503 572 503 548;g 159 572 640 572 617;r 174 433 482;r 192 250 253;g 204 47 412 130 300;r 219 160 412 170 370;r 235 115 276 205 250;g 249 276 435 290 435;g 264 390 617 480 503;g 279 503 640 548 550;r 294 370 412;r 309 205 390 205 345;r 323 160 345 160 210;r 338 92 298 205 298;g 353 280 412 280 390;r 368 250 503 250 390;g 384 92 345 270 320;r 399 276 366 295 322;g 414 322 435 366 412;g 429 412 503 460 503;r 444 460 548 503 548;r 459 322 575 345 527;r 473 300 435 345 412;k 488 300 390 345 347;r 503 298 370 322 345;r 518 298 390 345 366;g 533 322 435 366 412;r 548 253 435 366 412;g 564 390 503 390 503;g 580 370 525 370 525;k 598 708 711;r 611 700 894 868 894;r 624 780 938 845 868;r 640 686 868 708 868;r 655 665 754 708 732;k 669 665 754 708 710;r 684 597 732 665 690;k 699 642 732 662 665;r 714 572 686 640 665;r 731 460 640 503 617;r 747 340 525 340 525;g 760 322 525 345 525;r 776 642 711 660 711;g 789 642 754 665 732;g 804 711 800 732 777;g 819 777 847 777 847;r 836 756 871 777 871;g 850 756 868 777 868;g 864 847 938 847 915;g 879 871 960 936 938;r 896 802 940 845 940;g 909 847 892 868 870;r 925 777 892 822 871;r 939 732 824 800 802;g 954 802 868 825 845;g 969 868 915 868 915;r 985 802 938 868 915;k 999 847 892 868 870;g 1014 868 938 892 915;r 1030 868 915 868 892;r 1044 847 915 868 892;r 1060 756 894 800 894;g 1074 802 850 802 850;r 1089 777 868 822 850;g 1104 802 892 850 868;g 1119 868 960 870 945;k 1134 892 950 936 938;r 1150 824 950 871 950;g 1163 871 950 892 938;k 1179 847 983 936 938;r 1194 847 938 868 890`],
  [1200, `g 10 868 1028 870 1005;g 24 1060 1188 1098 1165;r 41 1095 1191 1098 1191;g 54 1235 1258;g 69 1348 1396;r 86 1303 1530 1415 1510;r 101 1326 1440 1345 1430;r 116 1326 1396 1345 1396;r 131 1303 1370 1325 1350;r 148 1186 1325 1188 1303;r 160 1030 1186 1118 1145;r 177 960 1118 960 1095;g 190 892 1098 938 1098;g 204 1052 1188 1075 1100;g 219 1098 1165 1098 1143;r 234 1030 1165 1098 1165;g 249 1075 1165 1098 1143;g 265 1098 1188 1140 1188;g 280 1167 1350 1167 1348;r 297 1210 1370 1210 1350;r 311 1075 1210 1095 1145;r 327 960 1077 1005 1077;g 340 960 1075 983 1075;r 355 850 1006 870 960;r 370 800 915 800 870;r 385 600 800 600 800;r 400 430 700 430 700;g 414 420 572 420 500;g 429 503 710 527 710;r 444 572 847 640 780;r 459 617 690 660 690;g 474 640 800 640 740;r 491 570 740 570 740;g 504 595 710 617 690;r 520 572 710 640 690;g 535 642 732 650 700;g 549 548 686 640 665;g 565 686 754 700 740;r 579 665 777 740 777;g 594 720 777 740 777;r 609 665 800 732 780;g 624 732 800 760 780;k 639 732 800 754 756;g 654 777 847 800 822;g 669 800 868 845 868;r 684 777 868 845 850;g 700 824 892 850 868;g 715 868 938 868 915;r 730 915 1006 936 960;r 744 870 965 936 960;g 760 938 983 940 960;g 775 960 1028 965 1006;r 791 938 1032 983 1032;g 804 983 1028 990 1005;r 819 915 1006 960 985;g 834 938 983 960 965;g 849 960 1028 965 990;r 864 938 1028 983 1006;r 880 938 1008 983 1008;r 896 915 1006 938 985;g 910 912 960 915 940;r 927 800 962 845 962;g 940 845 895 850 890;r 957 790 892 800 870;r 970 720 847;r 985 640 780 680 780;g 1000 700 847 700 820;r 1018 600 735 660 735;g 1030 600 780 640 780;g 1044 756 868 780 822;g 1059 820 868;k 1074 830 868;g 1089 847 915 868 892;r 1104 800 915 868 890;g 1119 855 892;g 1134 850 915 870 892;k 1149 868 915 895 915;r 1164 855 915 868 892;k 1179 847 892;g 1194 868 915 888 892;r 1212 868 938 870 892;g 1225 868 938 892 915;g 1239 915 960 930 945;r 1254 915 985 940 962`],
  [2460, `g 9 938 983;k 24 938 983;k 39 938 983;g 54 960 1006 983 1006;g 69 983 1006 983 1006;r 86 915 1006 938 1005;g 99 938 983;k 114 938 983;g 130 938 1006 960 1005;r 146 938 1006 960 990;g 159 960 1006;g 175 960 1028 990 1015;g 190 1006 1075 1035 1070;r 204 1030 1075;g 219 1030 1143 1055 1098;r 234 1008 1120 1052 1098;g 249 1052 1098 1070 1098;g 264 1075 1143;k 279 1075 1143 1118 1122;g 294 1098 1188 1143 1165;r 310 1120 1175 1130 1165;g 324 1143 1188;k 339 1143 1188;r 356 1006 1188 1075 1165;g 370 1075 1143 1075 1143;r 387 1052 1143 1070 1122;r 400 915 1028 915 960;r 414 802 960 868 915;g 429 824 985 850 960;g 444 938 1075 990 1030;r 459 915 1028;g 474 915 983;r 489 847 983 890 960;k 504 892 983;g 519 900 983 920 960;r 534 920 983;g 549 915 983 920 950;g 564 938 1006 960 990;g 579 960 1006;k 594 983 1028;g 609 1006 1052 1006 1050;g 624 1006 1075 1030 1055;g 640 1052 1098 1070 1090;r 655 1095 1165 1095 1145;r 671 960 1100 1028 1100;r 685 1006 1055 1028 1053;k 699 1008 1052;r 715 938 1030 1000 1030;g 729 1006 1052;r 744 960 1028 985 1010;r 759 892 1006 983 1006;k 774 960 1006;k 789 938 1006 983 985;k 804 960 1006;g 819 983 1028;r 835 983 1052 983 1030;g 849 960 1052 985 1030;r 866 983 1052 983 1030;g 880 985 1052 985 1030;k 894 1006 1052;r 910 1006 1052 1006 1030;g 925 1006 1052 1010 1052;r 940 960 1052 1010 1035;k 954 1005 1028;r 969 938 1028 983 1006;k 984 915 1006 960 983;r 1000 820 1006 822 962;r 1017 660 871 660 871;g 1029 572 824 640 800;r 1044 642 800 686 780;g 1059 750 847 770 820;k 1074 756 847 800 802;g 1089 802 938 822 915;k 1104 870 938;r 1119 847 920 868 915;g 1134 847 892;r 1150 847 915 868 910;r 1165 732 892 800 890;r 1179 780 868 800 825;r 1194 686 824 755 800;r 1209 710 800 732 770;r 1217 732 756`]
];

const colors = { r: "#c23531", g: "#129212", k: "#222" };
const box = document.getElementById("candles");

function addBar(x, y1, y2, color, width) {
  const p = document.createElementNS("http://www.w3.org/2000/svg", "path");
  p.setAttribute("d", `M${x} ${y1}V${y2}`);
  p.setAttribute("stroke", color);
  p.setAttribute("stroke-width", width);
  box.appendChild(p);
}

parts.forEach(([offset, rows]) => {
  rows.split(";").forEach(row => {
    const [c, x, high, low, top, bottom] = row.split(" ");
    addBar(+x + offset, high, low, colors[c], 2.4);
    if (top) addBar(+x + offset, top, bottom, colors[c], 4);
  });
});
```
